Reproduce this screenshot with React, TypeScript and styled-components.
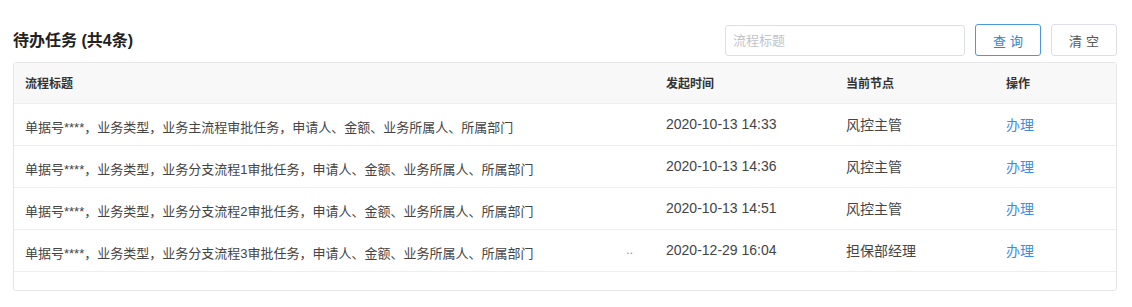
import styled, { createGlobalStyle } from "styled-components";

const GlobalStyle = createGlobalStyle`
  html, body {
    margin: 0;
    padding: 0;
    background: #fff;
  }
  body {
    font-family: "Liberation Sans", "Noto Sans CJK SC", sans-serif;
    color: #333;
  }
`;

const Page = styled.div`
  width: 1132px;
  box-sizing: border-box;
  padding: 24px 15px 0 13px;
`;

const Toolbar = styled.div`
  display: flex;
  align-items: center;
  height: 32px;
`;

const Title = styled.h2`
  margin: 0;
  flex: 1;
  font-size: 16px;
  font-weight: 700;
  color: #222;
  padding-bottom: 3px;
`;

const SearchInput = styled.input`
  width: 240px;
  height: 31px;
  box-sizing: border-box;
  border: 1px solid #dcdfe6;
  border-radius: 3px;
  padding: 0 7px;
  font-size: 13px;
  font-family: "Liberation Sans", "Noto Sans CJK SC", sans-serif;
  outline: none;
  &::placeholder {
    color: #c0c4cc;
  }
`;

const Button = styled.button<{ $primary?: boolean }>`
  width: 66px;
  height: 32px;
  margin-left: 10px;
  box-sizing: border-box;
  background: #fff;
  border: 1px solid ${(p) => (p.$primary ? "#4a9ad8" : "#dcdfe6")};
  border-radius: 3px;
  color: ${(p) => (p.$primary ? "#2f86cf" : "#555")};
  font-size: 13px;
  letter-spacing: 4px;
  text-indent: 4px;
  font-family: "Liberation Sans", "Noto Sans CJK SC", sans-serif;
`;

const Table = styled.div`
  margin-top: 6px;
  border: 1px solid #e6e6e6;
  border-radius: 3px;
  padding-bottom: 18px;
`;

const Row = styled.div<{ $head?: boolean }>`
  display: grid;
  grid-template-columns: 641px 180px 160px 1fr;
  height: ${(p) => (p.$head ? "40px" : "41px")};
  background: ${(p) => (p.$head ? "#f8f8f9" : "#fff")};
  border-bottom: 1px solid #ebeef2;
`;

const Cell = styled.div<{ $head?: boolean; $low?: boolean }>`
  display: flex;
  align-items: center;
  padding-left: 11px;
  padding-top: ${(p) => (p.$low ? "3px" : "0")};
  padding-bottom: ${(p) => (p.$low ? "0" : "2px")};
  font-size: ${(p) => (p.$head ? "12px" : "14px")};
  font-weight: ${(p) => (p.$head ? 700 : 400)};
  color: ${(p) => (p.$head ? "#333" : "#444")};
  white-space: nowrap;
  position: relative;
`;

const TitleText = styled.span`
  font-size: 13px;
  color: #444;
`;

const Dots = styled.span`
  position: absolute;
  right: 22px;
  top: 13px;
  font-size: 12px;
  color: #888;
`;

const Link = styled.a`
  color: #3a8ee6;
  font-size: 14px;
  cursor: pointer;
`;

const rows = [
  { title: "单据号****，业务类型，业务主流程审批任务，申请人、金额、业务所属人、所属部门", time: "2020-10-13 14:33", node: "风控主管" },
  { title: "单据号****，业务类型，业务分支流程1审批任务，申请人、金额、业务所属人、所属部门", time: "2020-10-13 14:36", node: "风控主管" },
  { title: "单据号****，业务类型，业务分支流程2审批任务，申请人、金额、业务所属人、所属部门", time: "2020-10-13 14:51", node: "风控主管" },
  { title: "单据号****，业务类型，业务分支流程3审批任务，申请人、金额、业务所属人、所属部门", time: "2020-12-29 16:04", node: "担保部经理", dots: true },
];

export default function App() {
  return (
    <Page>
      <GlobalStyle />
      <Toolbar>
        <Title>待办任务 (共4条)</Title>
        <SearchInput placeholder="流程标题" />
        <Button $primary>查询</Button>
        <Button>清空</Button>
      </Toolbar>
      <Table>
        <Row $head>
          <Cell $head>流程标题</Cell>
          <Cell $head>发起时间</Cell>
          <Cell $head>当前节点</Cell>
          <Cell $head>操作</Cell>
        </Row>
        {rows.map((r) => (
          <Row key={r.time}>
            <Cell $low>
              <TitleText>{r.title}</TitleText>
              {r.dots && <Dots>..</Dots>}
            </Cell>
            <Cell>{r.time}</Cell>
            <Cell>{r.node}</Cell>
            <Cell>
              <Link>办理</Link>
            </Cell>
          </Row>
        ))}
      </Table>
    </Page>
  );
}
